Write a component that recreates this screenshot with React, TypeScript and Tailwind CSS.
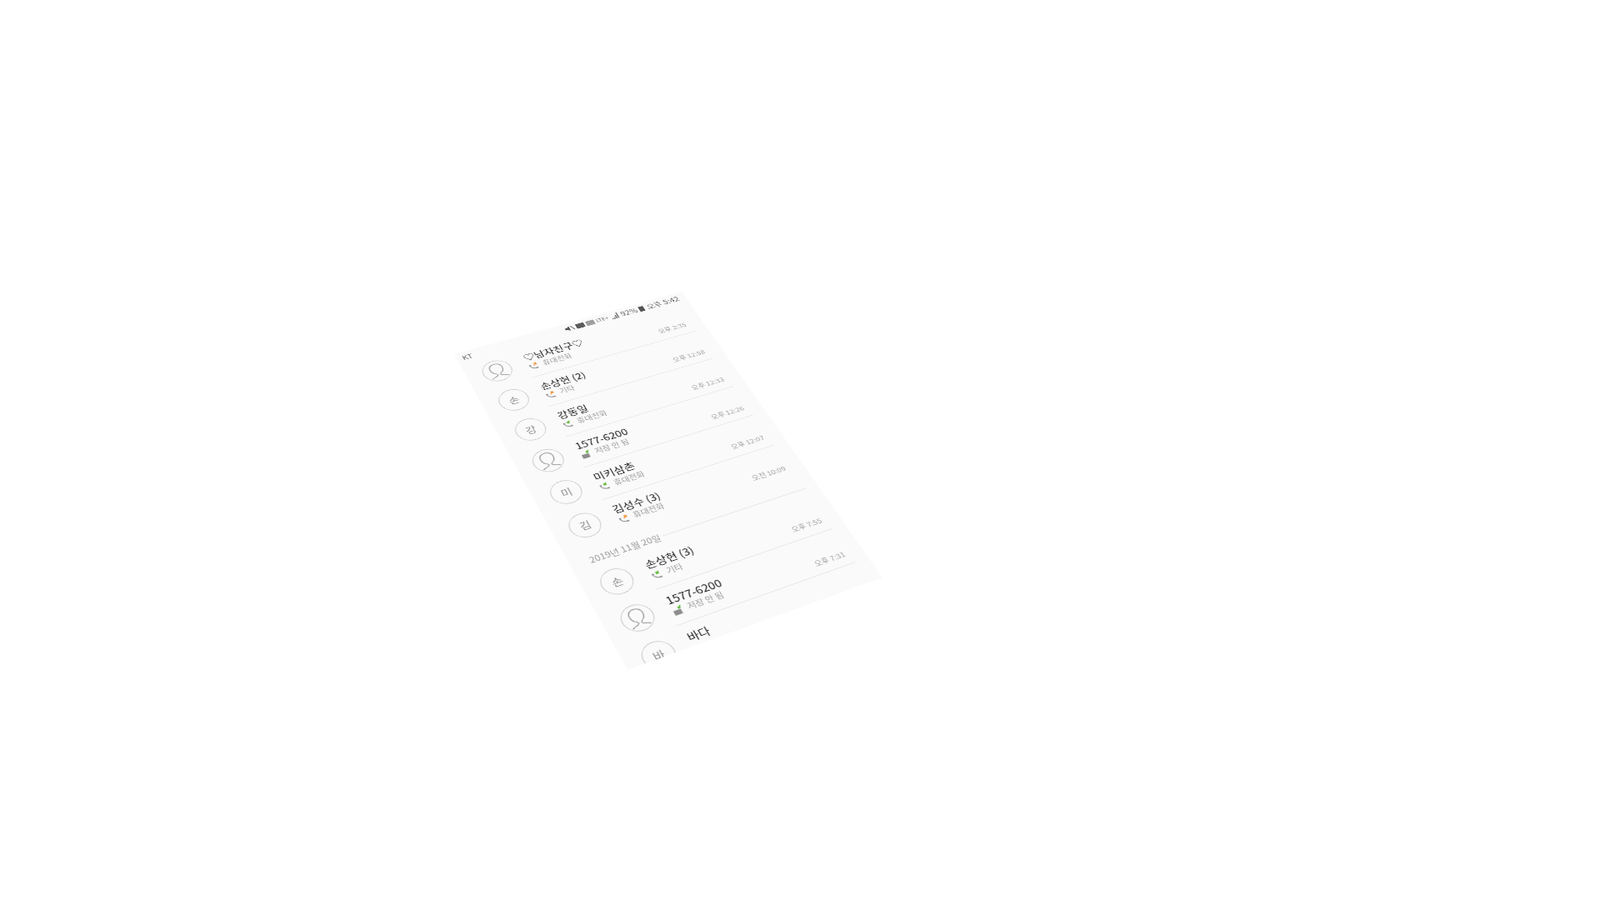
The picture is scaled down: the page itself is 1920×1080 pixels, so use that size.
import React from 'react';

type Pt = [number, number];

// phone screen is drawn flat, then mapped onto the tilted quad
const SCREEN_W = 360;
const SCREEN_H = 600;
const QUAD: Pt[] = [[545, 425], [818, 350], [1059, 693], [753, 804]];

function quadMatrix(w: number, h: number, q: Pt[]) {
  const [[x0, y0], [x1, y1], [x2, y2], [x3, y3]] = q;
  const dx1 = x1 - x2, dx2 = x3 - x2, dx3 = x0 - x1 + x2 - x3;
  const dy1 = y1 - y2, dy2 = y3 - y2, dy3 = y0 - y1 + y2 - y3;
  const det = dx1 * dy2 - dx2 * dy1;
  const g = (dx3 * dy2 - dx2 * dy3) / det;
  const k = (dx1 * dy3 - dx3 * dy1) / det;
  const a = (x1 - x0 + g * x1) / w, b = (x3 - x0 + k * x3) / h;
  const d = (y1 - y0 + g * y1) / w, e = (y3 - y0 + k * y3) / h;
  const m = [a, d, 0, g / w, b, e, 0, k / h, 0, 0, 1, 0, x0, y0, 0, 1];
  return `matrix3d(${m.join(',')})`;
}

function Person() {
  return (
    <svg viewBox="0 0 48 48" className="w-full h-full" fill="none" stroke="#858585" strokeWidth="1.4">
      <path d="M9 41c3-3 8-3 11-5 2-1 2-3 0-5-4-2-7-7-7-13 0-7 5-11 11-11s11 4 11 11c0 6-3 11-7 13-2 2-2 4 0 5 3 2 8 2 11 5" />
    </svg>
  );
}

function CallIcon({ tone }: { tone: 'orange' | 'green' }) {
  return (
    <svg viewBox="0 0 16 16" className="w-[15px] h-[15px] shrink-0" fill="none">
      <path d="M2 6c0 5 4 8.500 10 8.500" stroke="#8f8f8f" strokeWidth="1.500" />
      <path d="M1 5h3v3H2zM10 13l3-.500.500 2.500-3 .500z" fill="#8f8f8f" />
      <path
        d={tone === 'orange' ? 'M8 8l4-4M9 3.500h3.500V7' : 'M12 3L8 7M8 3.500V7h3.500'}
        stroke={tone === 'orange' ? '#f08a24' : '#5cb531'}
        strokeWidth="1.700"
      />
    </svg>
  );
}

function CardIcon() {
  return (
    <svg viewBox="0 0 16 16" className="w-[15px] h-[15px] shrink-0" fill="none">
      <rect x="1" y="7" width="11" height="8" fill="#8d8d8d" />
      <path d="M14 1L10 5M10 2v3h3" stroke="#5cb531" strokeWidth="1.700" />
    </svg>
  );
}

type Call = { name: string; sub: string; time: string; tone: 'orange' | 'green' | 'card'; avatar?: string };

function Row({ call, plain }: { call: Call; plain?: boolean }) {
  return (
    <div className="flex items-center h-[62.5px] pl-[23px]">
      <div className="w-[42px] h-[42px] rounded-full border border-[#c2c2c2] shrink-0 flex items-center justify-center text-[16px] text-[#8c8c8c] overflow-hidden">
        {call.avatar ?? <Person />}
      </div>
      <div className={`flex-1 self-stretch ml-[18px] mr-[20px] pl-[5px] pr-[6px] flex justify-between ${plain ? '' : 'border-b border-[#e4e4e4]'}`}>
        <div className="pt-[12px]">
          <div className="text-[16px] leading-[18px] text-[#1a1a1a]">{call.name}</div>
          {call.sub && (
            <div className="flex items-center gap-[6px] text-[12px] leading-[14px] text-[#9a9a9a] mt-[3px]">
              {call.tone === 'card' ? <CardIcon /> : <CallIcon tone={call.tone} />}
              {call.sub}
            </div>
          )}
        </div>
        <div className="pt-[35px] text-[11px] leading-[16px] text-[#a0a0a0]">{call.time}</div>
      </div>
    </div>
  );
}

const today: Call[] = [
  { name: '♡남자친구♡', sub: '휴대전화', time: '오후 2:35', tone: 'orange' },
  { name: '손상현 (2)', sub: '기타', time: '오후 12:58', tone: 'orange', avatar: '손' },
  { name: '강동일', sub: '휴대전화', time: '오후 12:33', tone: 'green', avatar: '강' },
  { name: '1577-6200', sub: '저장 안 됨', time: '오후 12:26', tone: 'card' },
  { name: '미키삼촌', sub: '휴대전화', time: '오후 12:07', tone: 'green', avatar: '미' },
  { name: '김성수 (3)', sub: '휴대전화', time: '오전 10:09', tone: 'orange', avatar: '김' },
];

const earlier: Call[] = [
  { name: '손상현 (3)', sub: '기타', time: '오후 7:55', tone: 'green', avatar: '손' },
  { name: '1577-6200', sub: '저장 안 됨', time: '오후 7:31', tone: 'card' },
  { name: '바다', sub: '', time: '', tone: 'green', avatar: '바' },
];

export default function App() {
  return (
    <div className="relative w-[1920px] h-[1080px] bg-white overflow-hidden font-['Noto_Sans_CJK_KR','Noto_Sans',sans-serif]">
      <div
        className="absolute left-0 top-0 origin-top-left w-[360px] h-[600px] bg-[#fafafa] overflow-hidden blur-[0.5px]"
        style={{ transform: quadMatrix(SCREEN_W, SCREEN_H, QUAD) }}
      >
        <div className="h-[24px] flex items-center justify-between pl-[8px] pr-[11px] text-[#666666]">
          <span className="text-[12px]">KT</span>
          <div className="flex items-center gap-[3px] text-[13px]">
            <svg viewBox="0 0 14 10" className="w-[14px] h-[10px]" fill="#555555"><path d="M0 3h3l4-3v10L3 7H0zM9 1l1-1 4 9-1 1z" /></svg>
            <span className="w-[13px] h-[10px] bg-[#5c5c5c] rounded-[1px]" />
            <span className="w-[13px] h-[10px] bg-[#9f9f9f] rounded-[1px]" />
            <span className="text-[9px] leading-[9px] mb-[2px]">LTE+</span>
            <svg viewBox="0 0 12 12" className="w-[14px] h-[12px]" fill="#777777"><path d="M0 12h2v-2H0zM3 12h2V8H3zM6 12h2V4H6zM9 12h2V0H9z" /></svg>
            <span>92%</span>
            <span className="w-[8px] h-[11px] bg-[#555555] rounded-[1px]" />
            <span className="ml-[2px]">오후 5:42</span>
          </div>
        </div>
        {today.map((c, i) => <Row key={i} call={c} plain={i === today.length - 1} />)}
        <div className="h-[40px] pl-[26px] pr-[18px] pb-[5px] flex items-end gap-[4px] text-[13px] leading-[18px] text-[#9a9a9a]">
          <span>2019년 11월 20일</span>
          <span className="flex-1 h-px bg-[#e2e2e2] mb-[9px]" />
        </div>
        {earlier.map((c, i) => <Row key={i} call={c} plain={i === earlier.length - 1} />)}
      </div>
    </div>
  );
}
